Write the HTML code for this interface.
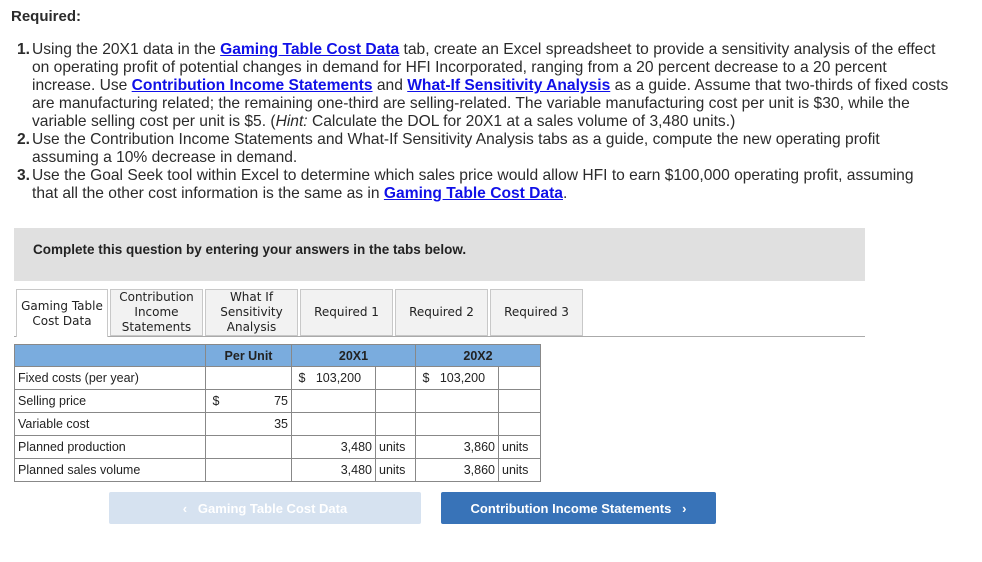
<!DOCTYPE html>
<html><head><meta charset="utf-8"><style>
*{margin:0;padding:0;box-sizing:border-box}
body{width:982px;height:562px;background:#fff;font-family:"Liberation Sans",sans-serif;color:#2b2b2b;position:relative;overflow:hidden}
.req{position:absolute;left:11px;top:8px;font-weight:bold;font-size:15px}
.ln{position:absolute;left:32px;font-size:15.6px;white-space:nowrap;line-height:18px}
.num{position:absolute;left:17px;font-size:15.6px;font-weight:bold;line-height:18px}
a{color:#1010e8;font-weight:bold;text-decoration:underline}
.gray{position:absolute;left:14px;top:228px;width:851px;height:53px;background:#e0e0e0;font-weight:bold;font-size:13.5px;padding:14px 0 0 19px;color:#222}
.tab{position:absolute;top:289px;height:47px;border:1px solid #c8c8c8;background:#f2f2f2;font-family:"DejaVu Sans",sans-serif;font-size:12px;text-align:center;display:flex;align-items:center;justify-content:center;line-height:15px;color:#222}
.tab.act{background:#fff;border-bottom:none;height:48px}
.hl{position:absolute;left:108px;top:336px;width:757px;height:1px;background:#aaa}
.hl0{position:absolute;left:14px;top:336px;width:2px;height:1px;background:#aaa}
table{position:absolute;left:14px;top:344px;border-collapse:collapse;font-size:12.5px;color:#222}
td{border:1px solid #888;height:23px;padding:0 3px;white-space:nowrap}
tr.h td{background:#7aacde;font-weight:bold;text-align:center;height:22px}
.r{text-align:right}
.btn{position:absolute;top:492px;height:32px;border-radius:2px;font-family:"Liberation Sans",sans-serif;font-weight:bold;font-size:13px;color:#fff;display:flex;align-items:center;justify-content:center}
</style></head><body>
<div class="req">Required:</div>
<div class="num" style="top:41px">1.</div>
<div class="ln" style="top:41px">Using the 20X1 data in the <a>Gaming Table Cost Data</a> tab, create an Excel spreadsheet to provide a sensitivity analysis of the effect</div>
<div class="ln" style="top:59px">on operating profit of potential changes in demand for HFI Incorporated, ranging from a 20 percent decrease to a 20 percent</div>
<div class="ln" style="top:77px">increase. Use <a>Contribution Income Statements</a> and <a>What-If Sensitivity Analysis</a> as a guide. Assume that two-thirds of fixed costs</div>
<div class="ln" style="top:95px">are manufacturing related; the remaining one-third are selling-related. The variable manufacturing cost per unit is $30, while the</div>
<div class="ln" style="top:113px">variable selling cost per unit is $5. (<i>Hint:</i> Calculate the DOL for 20X1 at a sales volume of 3,480 units.)</div>
<div class="num" style="top:131px">2.</div>
<div class="ln" style="top:131px">Use the Contribution Income Statements and What-If Sensitivity Analysis tabs as a guide, compute the new operating profit</div>
<div class="ln" style="top:149px">assuming a 10% decrease in demand.</div>
<div class="num" style="top:167px">3.</div>
<div class="ln" style="top:167px">Use the Goal Seek tool within Excel to determine which sales price would allow HFI to earn $100,000 operating profit, assuming</div>
<div class="ln" style="top:185px">that all the other cost information is the same as in <a>Gaming Table Cost Data</a>.</div>
<div class="gray">Complete this question by entering your answers in the tabs below.</div>
<div class="tab act" style="left:16px;width:92px">Gaming Table<br>Cost Data</div>
<div class="tab" style="left:110px;width:93px">Contribution<br>Income<br>Statements</div>
<div class="tab" style="left:205px;width:93px">What If<br>Sensitivity<br>Analysis</div>
<div class="tab" style="left:300px;width:93px">Required 1</div>
<div class="tab" style="left:395px;width:93px">Required 2</div>
<div class="tab" style="left:490px;width:93px">Required 3</div>
<div class="hl"></div><div class="hl0"></div>
<table>
<tr class="h"><td style="width:191px"></td><td colspan="2" style="width:86px">Per Unit</td><td colspan="2" style="width:124px">20X1</td><td colspan="2" style="width:125px">20X2</td></tr>
<tr><td>Fixed costs (per year)</td><td style="width:20px;border-right:none"></td><td style="border-left:none"></td><td style="width:84px;border-right:1px solid #888">&nbsp;$&nbsp;&nbsp;&nbsp;103,200</td><td style="width:40px"></td><td style="width:83px">&nbsp;$&nbsp;&nbsp;&nbsp;103,200</td><td style="width:42px"></td></tr>
<tr><td>Selling price</td><td style="border-right:none">&nbsp;$</td><td class="r" style="border-left:none">75</td><td></td><td></td><td></td><td></td></tr>
<tr><td>Variable cost</td><td style="border-right:none"></td><td class="r" style="border-left:none">35</td><td></td><td></td><td></td><td></td></tr>
<tr><td>Planned production</td><td style="border-right:none"></td><td style="border-left:none"></td><td class="r">3,480</td><td>units</td><td class="r">3,860</td><td>units</td></tr>
<tr><td>Planned sales volume</td><td style="border-right:none"></td><td style="border-left:none"></td><td class="r">3,480</td><td>units</td><td class="r">3,860</td><td>units</td></tr>
</table>
<div class="btn" style="left:109px;width:312px;background:#d6e2f0">‹&nbsp;&nbsp;&nbsp;Gaming Table Cost Data</div>
<div class="btn" style="left:441px;width:275px;background:#3873b8">Contribution Income Statements&nbsp;&nbsp;&nbsp;›</div>
</body></html>
